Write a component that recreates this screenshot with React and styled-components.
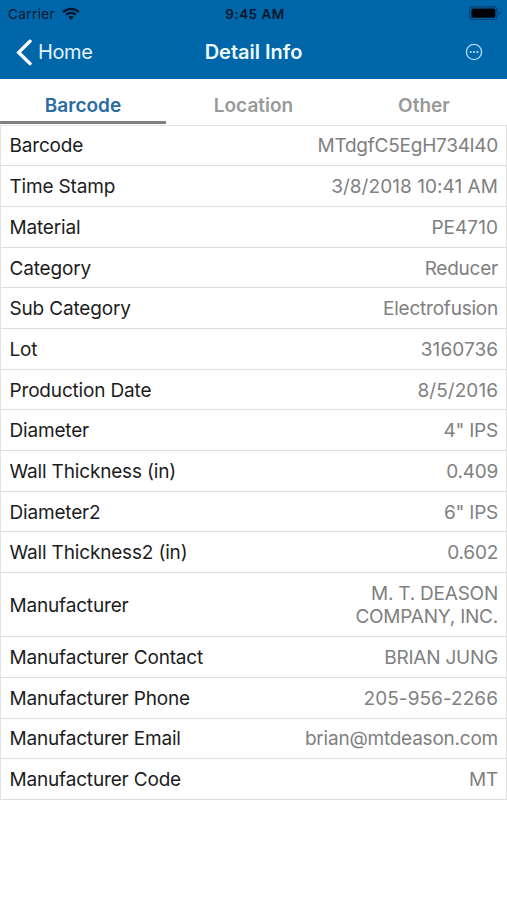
import React from "react";
import styled, { createGlobalStyle } from "styled-components";

const rows = [
  { label: "Barcode", value: "MTdgfC5EgH734l40" },
  { label: "Time Stamp", value: "3/8/2018 10:41 AM", numeric: true },
  { label: "Material", value: "PE4710", numeric: true },
  { label: "Category", value: "Reducer" },
  { label: "Sub Category", value: "Electrofusion" },
  { label: "Lot", value: "3160736", numeric: true },
  { label: "Production Date", value: "8/5/2016", numeric: true },
  { label: "Diameter", value: '4" IPS' },
  { label: "Wall Thickness (in)", value: "0.409" },
  { label: "Diameter2", value: '6" IPS' },
  { label: "Wall Thickness2 (in)", value: "0.602" },
  { label: "Manufacturer", value: "M. T. DEASON COMPANY, INC.", tall: true },
  { label: "Manufacturer Contact", value: "BRIAN JUNG" },
  { label: "Manufacturer Phone", value: "205-956-2266", numeric: true },
  { label: "Manufacturer Email", value: "brian@mtdeason.com" },
  { label: "Manufacturer Code", value: "MT" }
];

function WifiIcon() {
  return (
    <svg width="18" height="13" viewBox="0 0 18 13" fill="none" stroke="#06162a">
      <path d="M1.2 5.1C5.6 0.7 12.4 0.7 16.8 5.1" strokeWidth="2.2" />
      <path d="M4 8C6.8 5.2 11.2 5.2 14 8" strokeWidth="2.1" />
      <path d="M6.2 10.1C7.7 8.6 10.3 8.6 11.8 10.1L9 12.8Z" fill="#06162a" stroke="none" />
    </svg>
  );
}

function BatteryIcon() {
  return (
    <svg width="33" height="15" viewBox="0 0 33 15">
      <rect x="0.7" y="0.9" width="27.4" height="12.6" rx="3.4" fill="none" stroke="#043f70" strokeWidth="1.2" />
      <rect x="2.4" y="2.6" width="24" height="9.2" rx="1.8" fill="#000306" />
      <path d="M30 5.6C31.3 6.1 31.3 8.3 30 8.8Z" fill="#043760" />
    </svg>
  );
}

function BackIcon() {
  return (
    <svg width="16" height="27" viewBox="0 0 16 27" fill="none" stroke="#ffffff" strokeWidth="3.4">
      <path d="M14 2.2L2.7 13.4L14 24.6" strokeLinecap="round" />
    </svg>
  );
}

function MoreIcon() {
  return (
    <svg width="18" height="18" viewBox="0 0 18 18">
      <circle cx="9" cy="9" r="7.6" fill="none" stroke="#a9d8f8" strokeWidth="1.4" />
      <circle cx="5.6" cy="9" r="1.1" fill="#b8e0fa" />
      <circle cx="9" cy="9" r="1.1" fill="#b8e0fa" />
      <circle cx="12.4" cy="9" r="1.1" fill="#b8e0fa" />
    </svg>
  );
}

function App() {
  return (
    <Screen>
      <GlobalStyle />
      <Header>
        <StatusBar>
          <Carrier>
            Carrier
            <WifiIcon />
          </Carrier>
          <Clock>9:45 AM</Clock>
          <Battery>
            <BatteryIcon />
          </Battery>
        </StatusBar>
        <NavBar>
          <BackButton>
            <BackIcon />
            Home
          </BackButton>
          <Title>Detail Info</Title>
          <MoreButton aria-label="More">
            <MoreIcon />
          </MoreButton>
        </NavBar>
      </Header>
      <Tabs>
        <Tab $active>Barcode</Tab>
        <Tab>Location</Tab>
        <Tab>Other</Tab>
      </Tabs>
      <Details>
        {rows.map((row) => (
          <Row key={row.label} $tall={row.tall}>
            <Label>{row.label}</Label>
            <Value $tall={row.tall} $numeric={row.numeric}>
              {row.value}
            </Value>
          </Row>
        ))}
      </Details>
    </Screen>
  );
}

const GlobalStyle = createGlobalStyle`
  * {
    box-sizing: border-box;
  }

  body {
    margin: 0;
    background: #ffffff;
    font-family: Inter, "Liberation Sans", sans-serif;
  }

  button {
    border: 0;
    padding: 0;
    background: none;
    font: inherit;
  }
`;

const Screen = styled.div`
  width: 507px;
  height: 900px;
  overflow: hidden;
  background: #ffffff;
`;

const Header = styled.header`
  height: 79px;
  background: #0066aa;
`;

const StatusBar = styled.div`
  display: grid;
  grid-template-columns: 1fr auto 1fr;
  align-items: center;
  height: 27px;
  padding: 0 5px 0 8px;
  color: #06162a;
  font-size: 13.5px;
`;

const Carrier = styled.div`
  display: flex;
  align-items: center;
  gap: 7px;
  letter-spacing: 0.4px;
`;

const Clock = styled.div`
  font-weight: 600;
  letter-spacing: 0.5px;
`;

const Battery = styled.div`
  display: flex;
  justify-content: flex-end;
`;

const NavBar = styled.nav`
  display: grid;
  grid-template-columns: 1fr auto 1fr;
  align-items: center;
  height: 50px;
  padding: 0 24px;
`;

const BackButton = styled.button`
  display: flex;
  align-items: center;
  gap: 6px;
  margin-left: -8px;
  color: #e2f4ff;
  font-size: 20px;
  letter-spacing: -0.4px;
`;

const Title = styled.h1`
  margin: 0;
  color: #eefaff;
  font-size: 20px;
  font-weight: 600;
  letter-spacing: 0;
`;

const MoreButton = styled.button`
  display: flex;
  justify-content: flex-end;
`;

const Tabs = styled.div`
  display: grid;
  grid-template-columns: 166px 175px 166px;
  height: 45.6px;
`;

const Tab = styled.button`
  height: 45px;
  padding-top: 11px;
  border-bottom: 3px solid ${(props) => (props.$active ? "#808080" : "transparent")};
  color: ${(props) => (props.$active ? "#2a6ba3" : "#999999")};
  font-size: 19px;
  font-weight: 600;
`;

const Details = styled.dl`
  margin: 0;
  border: 1px solid #e2e2e2;
  border-bottom: 0;
`;

const Row = styled.div`
  display: flex;
  align-items: center;
  justify-content: space-between;
  height: ${(props) => (props.$tall ? "64px" : "40.7px")};
  padding: 1px 8px 0;
  border-bottom: 1px solid #dcdcdc;
  font-size: 19px;
  line-height: 23px;
`;

const Label = styled.dt`
  padding-left: 0.5px;
  color: #1c1c1c;
  letter-spacing: -0.17px;
`;

const Value = styled.dd`
  width: ${(props) => (props.$tall ? "160px" : "auto")};
  margin: 0;
  color: #808080;
  letter-spacing: ${(props) => (props.$numeric ? "0.05px" : "-0.23px")};
  text-align: right;
`;

export default App;
